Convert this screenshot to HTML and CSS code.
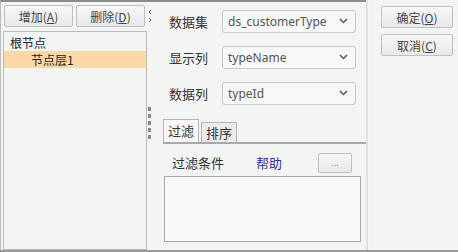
FILE: index.html
```html
<!DOCTYPE html>
<html lang="zh-CN">
<head>
    <meta charset="UTF-8">
    <title>节点属性</title>
    <link rel="stylesheet" href="styles.css">
</head>
<body>
    <div class="dialog">
        <div class="left-pane">
            <div class="toolbar">
                <button type="button" class="btn">增加(<u>A</u>)</button>
                <button type="button" class="btn">删除(<u>D</u>)</button>
            </div>
            <div class="tree">
                <div class="tree-item">根节点</div>
                <div class="tree-item child selected">节点层1</div>
            </div>
        </div>

        <div class="splitter">
            <svg class="arrows" width="4" height="14" viewBox="0 0 4 14">
                <path d="M3 1L1 3l2 2" fill="none" stroke="#666" stroke-width="1"/>
                <path d="M1 9l2 2-2 2" fill="none" stroke="#666" stroke-width="1"/>
            </svg>
            <div class="grip">
                <i></i><i></i><i></i><i></i><i></i>
            </div>
        </div>

        <div class="middle-pane">
            <div class="field">
                <label>数据集</label>
                <div class="select"><span>ds_customerType</span><svg width="9" height="6" viewBox="0 0 9 6"><path d="M1 1l3.5 3.5L8 1" fill="none" stroke="#555" stroke-width="1.5"/></svg></div>
            </div>
            <div class="field">
                <label>显示列</label>
                <div class="select"><span>typeName</span><svg width="9" height="6" viewBox="0 0 9 6"><path d="M1 1l3.5 3.5L8 1" fill="none" stroke="#555" stroke-width="1.5"/></svg></div>
            </div>
            <div class="field">
                <label>数据列</label>
                <div class="select"><span>typeId</span><svg width="9" height="6" viewBox="0 0 9 6"><path d="M1 1l3.5 3.5L8 1" fill="none" stroke="#555" stroke-width="1.5"/></svg></div>
            </div>

            <div class="tabs">
                <div class="tab active">过滤</div>
                <div class="tab">排序</div>
            </div>
            <div class="tab-panel">
                <div class="filter-row">
                    <span class="filter-label">过滤条件</span>
                    <a class="help">帮助</a>
                    <button type="button" class="btn small">...</button>
                </div>
                <div class="textarea"></div>
            </div>
        </div>

        <div class="right-pane">
            <button type="button" class="btn wide">确定(<u>O</u>)</button>
            <button type="button" class="btn wide">取消(<u>C</u>)</button>
        </div>
    </div>
</body>
</html>
```

FILE: styles.css
```css
body {
    margin: 0;
    background: #f3f4f4;
    font-family: "Noto Sans CJK SC", "Noto Sans", sans-serif;
    font-size: 12px;
    color: #333;
}
.dialog {
    width: 458px;
    height: 252px;
    box-sizing: border-box;
    display: flex;
    border-bottom: 2px solid #9a9a9a;
    background: #f3f4f4;
}
.left-pane, .splitter, .middle-pane {
    border-top: 2px solid #8c8c8c;
}
.btn {
    font-family: "Noto Sans CJK SC", sans-serif;
    font-size: 12px;
    color: #444;
    background: linear-gradient(#f7f7f7, #e9e9e9);
    border: 1px solid #c0c0c0;
    border-radius: 2px;
    padding: 0;
    height: 22px;
}

/* left */
.left-pane {
    width: 144px;
    padding: 3px 0 0 2px;
    display: flex;
    flex-direction: column;
    border-left: 1px solid #bdbdbd;
}
.toolbar {
    display: flex;
    gap: 3px;
    padding-left: 1px;
    margin-bottom: 4px;
}
.toolbar .btn {
    width: 69px;
}
.tree {
    flex: 1;
    border: 1px solid #b9b9b9;
    background: #f3f4f4;
    padding-top: 2px;
}
.tree-item {
    height: 17px;
    line-height: 17px;
    padding-left: 6px;
    font-size: 12px;
    color: #222;
}
.tree-item.child {
    padding-left: 27px;
}
.tree-item.selected {
    background: #fcd8a6;
}

/* splitter */
.splitter {
    width: 5px;
    display: flex;
    flex-direction: column;
    align-items: center;
}
.arrows {
    margin-top: 7px;
}
.grip {
    margin-top: 84px;
    display: flex;
    flex-direction: column;
    gap: 3px;
}
.grip i {
    display: block;
    width: 3px;
    height: 4px;
    background: #8a8a8a;
}

/* middle */
.middle-pane {
    width: 203px;
    padding: 7px 0 0 11px;
    display: flex;
    flex-direction: column;
}
.field {
    display: flex;
    align-items: center;
    height: 24px;
    margin-bottom: 12px;
}
.field label {
    width: 59px;
    box-sizing: border-box;
    padding-left: 6px;
    font-size: 13px;
    color: #333;
}
.select {
    width: 134px;
    height: 23px;
    box-sizing: border-box;
    border: 1px solid #c8c8c8;
    border-radius: 3px;
    background: #f7f8f8;
    display: flex;
    align-items: center;
    justify-content: space-between;
    padding: 0 7px 0 5px;
    font-family: "Noto Sans", sans-serif;
    font-size: 12px;
    color: #555;
}
.tabs {
    display: flex;
    align-items: flex-end;
    gap: 2px;
    margin-top: 3px;
    height: 22px;
}
.tab {
    height: 19px;
    line-height: 19px;
    padding: 0 4px;
    border: 1px solid #b5b5b5;
    border-bottom: none;
    background: #ececec;
    font-size: 13px;
    color: #333;
}
.tab.active {
    height: 22px;
    line-height: 22px;
    background: #f8f8f8;
}
.tab-panel {
    flex: 1;
    border-top: 2px solid #a9a9a9;
    padding: 8px 0 0 1px;
}
.filter-row {
    display: flex;
    align-items: center;
    height: 21px;
    margin-bottom: 3px;
}
.filter-label {
    padding-left: 8px;
    width: 92px;
    box-sizing: border-box;
    font-size: 13px;
}
.help {
    color: #2f2fa8;
    font-size: 13px;
    width: 62px;
}
.btn.small {
    width: 34px;
    height: 20px;
    font-size: 9px;
    color: #999;
}
.textarea {
    width: 197px;
    height: 66px;
    box-sizing: border-box;
    border: 1px solid #a8a8a8;
    background: #f8f9f9;
}

/* right */
.right-pane {
    flex: 1;
    border-left: 2px solid #e0e0e0;
    box-shadow: inset 1px 0 0 #fafafa;
    padding: 6px 0 0 13px;
    display: flex;
    flex-direction: column;
    gap: 6px;
}
.btn.wide {
    width: 72px;
}
```
